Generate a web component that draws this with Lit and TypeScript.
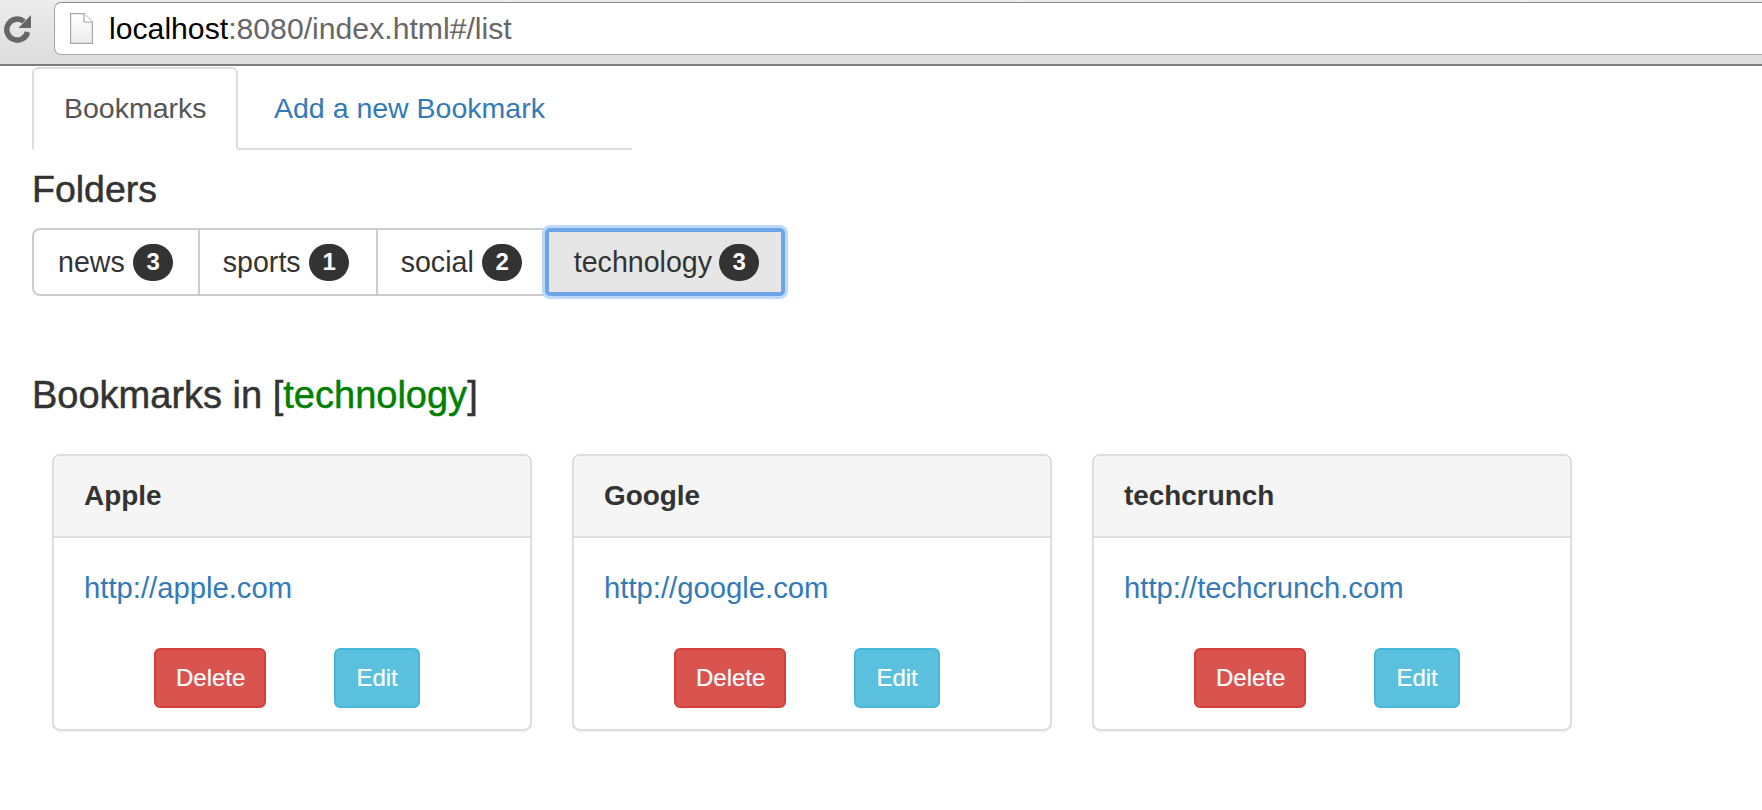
import { LitElement, html, css } from "lit";
import { customElement } from "lit/decorators.js";

const FOLDERS = [
  { name: "news", count: 3 },
  { name: "sports", count: 1 },
  { name: "social", count: 2 },
  { name: "technology", count: 3, active: true },
];
const CARDS = [
  { title: "Apple", url: "http://apple.com" },
  { title: "Google", url: "http://google.com" },
  { title: "techcrunch", url: "http://techcrunch.com" },
];

@customElement("app-root")
export class AppRoot extends LitElement {
  static styles = css`
    :host { display: block; width: 1762px; height: 810px; overflow: hidden; background: #fff; color: #333;
      font-family: "Liberation Sans", Arial, sans-serif; font-size: 28.5px; }
    a { color: #337ab7; text-decoration: none; }
    .toolbar { height: 66px; box-sizing: border-box; padding: 2px 0 9px 0; display: flex; align-items: stretch;
      background: linear-gradient(#ececec, #dddddd); border-bottom: 2px solid #7c7c7c; }
    .reload { width: 54px; flex: none; display: flex; align-items: center; padding: 0 0 0 3px; box-sizing: border-box; }
    .address { flex: 1; background: #fff; border: 1px solid #a4a4a4; border-right: 0; border-top-color: #8e8e8e; border-radius: 7px 0 0 7px;
      display: flex; align-items: center; padding-left: 15px; font-size: 30.2px; color: #676767; }
    .address svg { margin-right: 16px; }
    .address b { font-weight: 400; color: #000; }
    .main { padding-left: 32px; }
    .tabs { display: flex; width: 600px; height: 83px; margin-top: 1px; border-bottom: 2px solid #ddd; box-sizing: border-box; }
    .tab { display: flex; align-items: center; padding: 0 32px 0 36px; box-sizing: border-box; height: 83px; }
    .tab.on { width: 206px; padding: 0 0 0 30px; color: #555; background: #fff; border: 2px solid #ddd; border-bottom-color: #fff; border-radius: 6px 6px 0 0; }
    h2 { font-size: 37.5px; font-weight: 400; margin: 0; line-height: 40px; -webkit-text-stroke: 0.5px #333; }
    h2.folders { margin-top: 19px; }
    .group { display: inline-flex; height: 68px; margin-top: 19px; font-size: 28.6px; }
    .seg { display: flex; align-items: center; gap: 8.5px; box-sizing: border-box; border: 2px solid #ccc; border-right-width: 0; background: #fff; padding: 0 26.5px 0 23px; }
    .seg:first-child { border-radius: 8px 0 0 8px; padding-left: 24px; padding-right: 24.5px; }
    .seg.on { margin-left: -4px; gap: 7px; background: #e6e6e6; border: 4px solid #6da6e8; border-radius: 5px; box-shadow: 0 0 0 3px #bcd9fb; position: relative; padding: 0 22px 0 25px; }
    .badge { display: flex; align-items: center; justify-content: center; background: #333; color: #fff; font-size: 24px; font-weight: 700; width: 40px; height: 37px; border-radius: 19px; }
    h2.in { margin-top: 79px; font-size: 38px; }
    .in i { font-style: normal; color: #008000; -webkit-text-stroke: 0.5px #008000; }
    .cards { display: flex; gap: 40px; margin: 39px 0 0 20px; }
    .card { width: 480px; height: 277px; box-sizing: border-box; border: 2px solid #ddd; border-radius: 8px; box-shadow: 0 1px 2px rgba(0,0,0,.05); }
    .head { height: 82px; box-sizing: border-box; background: #f5f5f5; border-bottom: 2px solid #ddd; border-radius: 6px 6px 0 0; padding-left: 30px; display: flex; align-items: center; font-weight: 700; font-size: 27.9px; }
    .body { padding: 30px 30px 0; }
    .link { display: block; line-height: 40px; font-size: 29.25px; }
    .acts { display: flex; gap: 68px; margin: 40px 0 0 70px; }
    .btn { display: flex; align-items: center; height: 60px; box-sizing: border-box; padding: 0 20px; border: 2px solid; border-radius: 6px; color: #fff; font-size: 24px; -webkit-text-stroke: 0.2px #fff; }
    .del { background: #d9534f; border-color: #d43f3a; padding-right: 19px; }
    .edit { background: #5bc0de; border-color: #46b8da; }
  `;

  render() {
    return html`
      <div class="toolbar">
        <div class="reload">
          <svg width="30" height="30" viewBox="0 0 30 30"><path d="M21 7.5 A10.5 10.5 0 1 0 24.5 18" fill="none" stroke="#666" stroke-width="5.5"/><path d="M28 1 V14 H15.5 Z" fill="#666"/></svg>
        </div>
        <div class="address">
          <svg width="23" height="31" viewBox="0 0 23 31"><defs><linearGradient id="f" x1="0" y1="0" x2="0" y2="1"><stop offset="0" stop-color="#fff"/><stop offset="1" stop-color="#ececec"/></linearGradient></defs><path d="M.6.6 H14 L22.4 9 V30.4 H.6 Z" fill="url(#f)" stroke="#a8a8a8" stroke-width="1.2"/><path d="M14 .6 V9 H22.4" fill="#fff" stroke="#a8a8a8" stroke-width="1.2"/></svg>
          <span><b>localhost</b>:8080/index.html#/list</span>
        </div>
      </div>
      <div class="main">
        <div class="tabs">
          <div class="tab on">Bookmarks</div>
          <a class="tab" href="#">Add a new Bookmark</a>
        </div>
        <h2 class="folders">Folders</h2>
        <div class="group">
          ${FOLDERS.map((f) => html`<div class="seg ${f.active ? "on" : ""}">${f.name}<span class="badge">${f.count}</span></div>`)}
        </div>
        <h2 class="in">Bookmarks in [<i>technology</i>]</h2>
        <div class="cards">
          ${CARDS.map((c) => html`
            <div class="card">
              <div class="head">${c.title}</div>
              <div class="body">
                <a class="link" href="#">${c.url}</a>
                <div class="acts"><div class="btn del">Delete</div><div class="btn edit">Edit</div></div>
              </div>
            </div>`)}
        </div>
      </div>
    `;
  }
}
